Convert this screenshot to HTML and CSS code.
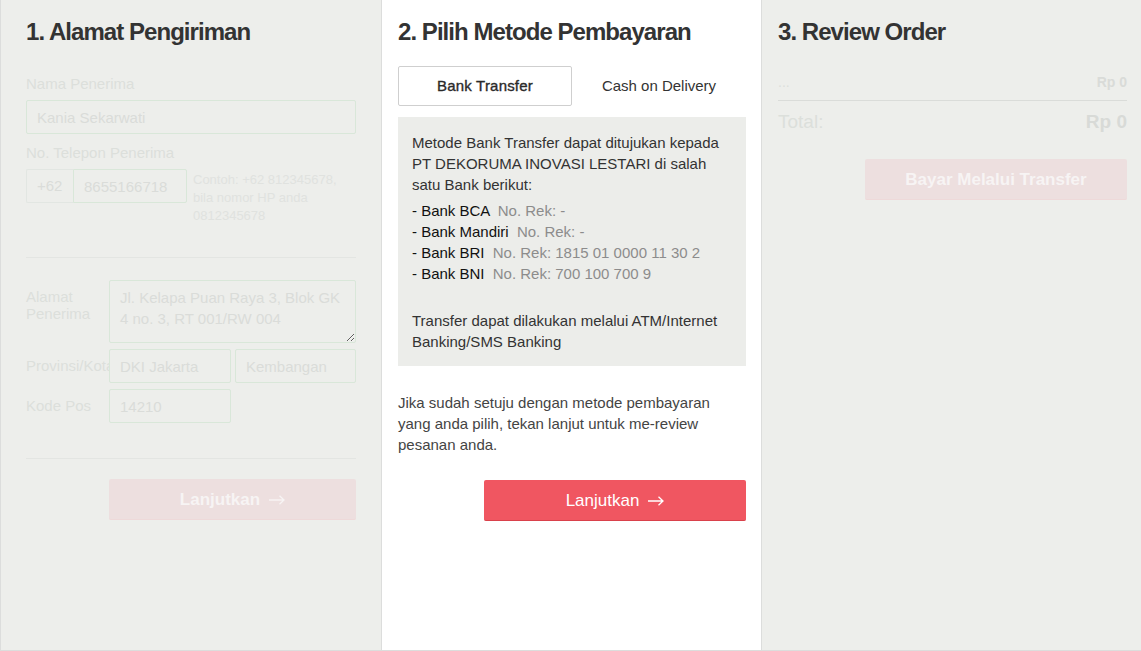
FILE: index.html
```html
<!DOCTYPE html>
<html lang="id">
<head>
    <meta charset="UTF-8">
    <meta name="viewport" content="width=device-width, initial-scale=1.0">
    <title>Checkout</title>
    <link rel="stylesheet" href="styles.css">
</head>
<body>
    <div class="checkout">
        <!-- langkah 1: alamat (tidak aktif) -->
        <section class="step step-faded step-address">
            <h2 class="step-title">1. Alamat Pengiriman</h2>

            <label class="field-label">Nama Penerima</label>
            <input type="text" class="field" value="Kania Sekarwati" />

            <label class="field-label">No. Telepon Penerima</label>
            <div class="phone-row">
                <span class="phone-code">+62</span>
                <input type="text" class="field phone-input" value="8655166718" />
                <p class="phone-hint">Contoh: +62 812345678, bila nomor HP anda 0812345678</p>
            </div>

            <hr class="divider divider-top" />

            <div class="form-row">
                <label class="row-label">Alamat Penerima</label>
                <textarea class="field field-area" spellcheck="false">Jl. Kelapa Puan Raya 3, Blok GK 4 no. 3, RT 001/RW 004</textarea>
            </div>
            <div class="form-row">
                <label class="row-label nowrap">Provinsi/Kota</label>
                <div class="field-pair">
                    <input type="text" class="field" value="DKI Jakarta" />
                    <input type="text" class="field" value="Kembangan" />
                </div>
            </div>
            <div class="form-row">
                <label class="row-label">Kode Pos</label>
                <input type="text" class="field field-half" value="14210" />
            </div>

            <hr class="divider divider-bottom" />

            <div class="actions">
                <button type="button" class="btn btn-faded btn-bold">Lanjutkan
                    <svg class="arrow" width="16" height="10" viewBox="0 0 16 10"><path d="M0 5H15M10.5 0.8L15 5L10.5 9.2" fill="none" stroke="currentColor" stroke-width="1.3"/></svg>
                </button>
            </div>
        </section>

        <!-- langkah 2: metode pembayaran (aktif) -->
        <section class="step step-payment">
            <h2 class="step-title">2. Pilih Metode Pembayaran</h2>

            <div class="tabs">
                <div class="tab tab-active">Bank Transfer</div>
                <div class="tab">Cash on Delivery</div>
            </div>

            <div class="info-box">
                <p class="info-text">Metode Bank Transfer dapat ditujukan kepada PT DEKORUMA INOVASI LESTARI di salah satu Bank berikut:</p>
                <ul class="bank-list">
                    <li>- Bank BCA <span class="rek">No. Rek: -</span></li>
                    <li>- Bank Mandiri <span class="rek">No. Rek: -</span></li>
                    <li>- Bank BRI <span class="rek">No. Rek: 1815 01 0000 11 30 2</span></li>
                    <li>- Bank BNI <span class="rek">No. Rek: 700 100 700 9</span></li>
                </ul>
                <p class="info-text info-note">Transfer dapat dilakukan melalui ATM/Internet Banking/SMS Banking</p>
            </div>

            <p class="confirm-text">Jika sudah setuju dengan metode pembayaran yang anda pilih, tekan lanjut untuk me-review pesanan anda.</p>

            <div class="actions">
                <button type="button" class="btn btn-primary">Lanjutkan
                    <svg class="arrow" width="16" height="10" viewBox="0 0 16 10"><path d="M0 5H15M10.5 0.8L15 5L10.5 9.2" fill="none" stroke="currentColor" stroke-width="1.3"/></svg>
                </button>
            </div>
        </section>

        <!-- langkah 3: review (tidak aktif) -->
        <section class="step step-faded step-review">
            <h2 class="step-title">3. Review Order</h2>

            <div class="order-line">
                <span class="order-item">...</span>
                <span class="order-price">Rp 0</span>
            </div>
            <div class="order-total">
                <span>Total:</span>
                <span class="total-price">Rp 0</span>
            </div>

            <div class="actions actions-review">
                <button type="button" class="btn btn-faded btn-bold">Bayar Melalui Transfer</button>
            </div>
        </section>
    </div>
</body>
</html>
```

FILE: styles.css
```css
* {
    box-sizing: border-box;
}
body {
    margin: 0;
    font-family: "Liberation Sans", Arial, sans-serif;
    color: #333;
    background-color: #fff;
}
.checkout {
    display: grid;
    grid-template-columns: 381px 380px 1fr;
    height: 651px;
    border-bottom: 1px solid #dcdddc;
}
.step {
    padding: 18px 14px 0 16px;
    border-left: 1px solid #dcdddc;
    overflow: hidden;
}
.step-faded {
    background-color: #edeeeb;
}
.step-address {
    padding: 18px 25px 0 25px;
}
.step-payment {
    background-color: #fff;
    padding-right: 15px;
}
.step-title {
    margin: 0;
    font-size: 24px;
    line-height: 28px;
    font-weight: bold;
    letter-spacing: -0.95px;
    color: #333;
}

/* form alamat */
.field-label {
    display: block;
    font-size: 15px;
    line-height: 20px;
    color: #dcdfdb;
    margin: 28px 0 6px;
}
.field-label + .field + .field-label {
    margin-top: 9px;
}
.field {
    display: block;
    width: 100%;
    height: 34px;
    margin: 0;
    padding: 0 10px;
    border: 1px solid #d9e7d9;
    border-radius: 2px;
    background-color: #edeeeb;
    font-family: "Liberation Sans", Arial, sans-serif;
    font-size: 15px;
    color: #dadcd9;
    outline: none;
}
.phone-row {
    display: flex;
    align-items: flex-start;
}
.phone-code {
    width: 47px;
    height: 34px;
    line-height: 32px;
    padding-left: 10px;
    font-size: 15px;
    color: #dadcd9;
    border: 1px solid #e2e6e2;
    border-right: 0;
    border-radius: 2px 0 0 2px;
}
.phone-input {
    width: 114px;
    border-radius: 0 2px 2px 0;
}
.phone-hint {
    width: 152px;
    margin: 2px 0 0 6px;
    font-size: 13px;
    line-height: 18px;
    color: #e0e2df;
}
.divider {
    height: 0;
    margin: 0;
    border: 0;
    border-top: 1px solid #e3e5e2;
}
.divider-top {
    margin: 32px 0 22px;
}
.divider-bottom {
    margin: 35px 0 20px;
}
.form-row {
    display: grid;
    grid-template-columns: 83px 1fr;
    margin-bottom: 6px;
}
.row-label {
    padding: 8px 6px 0 0;
    font-size: 15px;
    line-height: 17px;
    color: #dcdfdb;
}
.nowrap {
    white-space: nowrap;
}
.field-area {
    height: 63px;
    padding: 6px 10px;
    line-height: 21px;
    resize: vertical;
}
.field-pair {
    display: grid;
    grid-template-columns: 122px 1fr;
    gap: 4px;
}
.field-half {
    width: 122px;
}

/* tombol */
.actions {
    display: flex;
    justify-content: flex-end;
}
.btn {
    display: flex;
    align-items: center;
    justify-content: center;
    gap: 9px;
    width: 247px;
    height: 41px;
    padding: 1px 0 0;
    border: 0;
    border-radius: 2px;
    font-family: "Liberation Sans", Arial, sans-serif;
    font-size: 17px;
    color: #fff;
}
.btn-bold {
    font-weight: bold;
}
.btn-faded {
    background-color: #eddfdf;
    border-bottom: 1px solid #eed9d9;
    color: #f7f4f4;
}
.btn-primary {
    width: 262px;
    background-color: #f05661;
    border-bottom: 1px solid #d9414b;
}
.arrow {
    display: block;
    margin-top: 1px;
}

/* metode pembayaran */
.tabs {
    display: grid;
    grid-template-columns: 1fr 1fr;
    margin-top: 20px;
}
.tab {
    height: 40px;
    line-height: 40px;
    text-align: center;
    font-size: 15px;
    color: #333;
}
.tab-active {
    border: 1px solid #cfcfcf;
    border-radius: 2px;
    line-height: 38px;
    color: #2a2a2a;
    letter-spacing: 0.2px;
    -webkit-text-stroke: 0.35px #2a2a2a;
}
.info-box {
    margin-top: 11px;
    padding: 15px 24px 14px 14px;
    background-color: #ecedea;
    font-size: 15px;
    line-height: 21px;
}
.info-text {
    margin: 0;
    color: #333;
}
.bank-list {
    margin: 5px 0 0;
    padding: 0;
    list-style: none;
    color: #111;
}
.rek {
    margin-left: 4px;
    color: #8c8c8c;
}
.info-note {
    margin-top: 26px;
}
.confirm-text {
    max-width: 330px;
    margin: 26px 0 25px;
    font-size: 15px;
    line-height: 21px;
    color: #444;
}

/* review */
.order-line {
    display: flex;
    justify-content: space-between;
    margin-top: 26px;
    padding-bottom: 8px;
    line-height: 20px;
    font-size: 14px;
    border-bottom: 1px solid #dadcd9;
}
.order-item {
    color: #dcdfdb;
}
.order-price {
    font-weight: bold;
    color: #d9dbd8;
}
.order-total {
    display: flex;
    justify-content: space-between;
    margin-top: 10px;
    font-size: 19px;
    line-height: 22px;
    color: #dcdfdb;
}
.total-price {
    font-weight: bold;
    color: #d8dad7;
}
.actions-review {
    margin-top: 26px;
}
.actions-review .btn {
    width: 262px;
}
```
